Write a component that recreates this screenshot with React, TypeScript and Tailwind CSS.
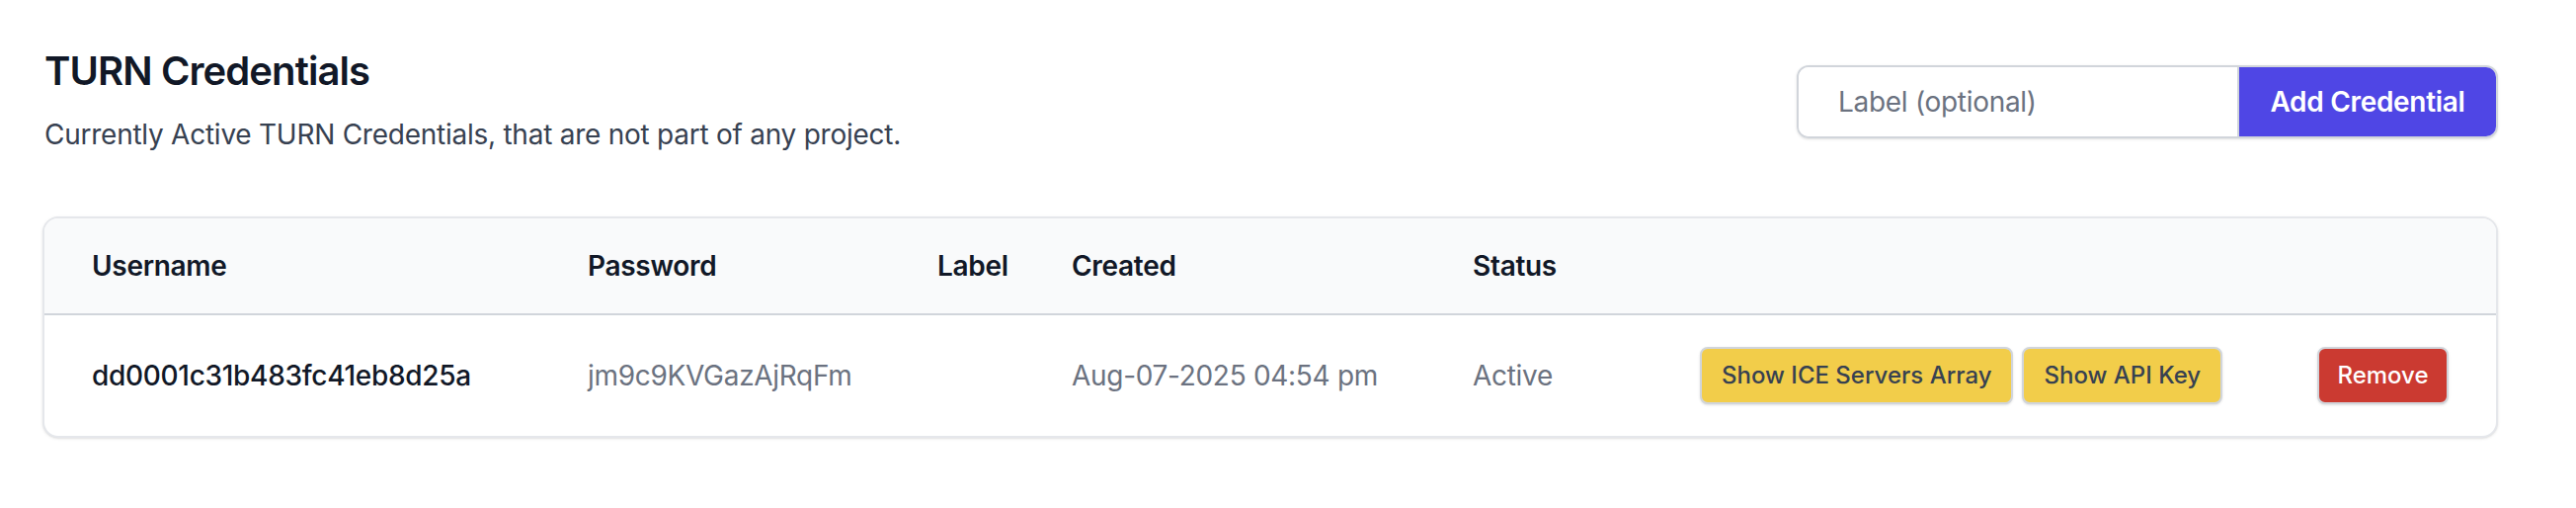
import React from "react";

const font = { fontFamily: "Inter, 'Noto Sans', sans-serif" };

export default function App() {
  return (
    <div
      className="w-[2608px] h-[514px] bg-white pl-[43px] pr-[79px] pt-[44px] text-[#111827]"
      style={font}
    >
      <div className="flex items-center justify-between pl-[2px]">
        <div>
          <h1 className="text-[40px] leading-[56px] font-semibold tracking-[-0.9px] text-[#111827]">
            TURN Credentials
          </h1>
          <p className="mt-[16px] text-[28px] leading-[40px] tracking-[-0.25px] text-[#374151]">
            Currently Active TURN Credentials, that are not part of any project.
          </p>
        </div>
        <div className="flex h-[74px] mt-[6px] rounded-[12px] shadow-sm border-2 border-[#d1d5db] overflow-hidden">
          <input
            className="w-[446px] h-full pl-[40px] pr-[20px] text-[28px] tracking-[-0.3px] text-[#111827] placeholder:text-[#6b7280] outline-none bg-white border-r-2 border-[#d1d5db]"
            placeholder="Label (optional)"
          />
          <button className="w-[260px] h-full bg-[#4f46e5] text-white text-[28px] tracking-[-0.3px] font-semibold">
            Add Credential
          </button>
        </div>
      </div>

      <div className="mt-[63px] rounded-[16px] border-2 border-[#e5e7eb] shadow-sm overflow-hidden bg-white">
        <div className="grid grid-cols-[502px_354px_136px_406px_230px_625px_1fr] h-[98px] items-center bg-[#f9fafb] border-b-2 border-[#d1d5db] text-[28px] tracking-[-0.3px] font-semibold text-[#111827]">
          <div className="pl-[48px]">Username</div>
          <div className="pl-[48px]">Password</div>
          <div className="pl-[48px]">Label</div>
          <div className="pl-[48px]">Created</div>
          <div className="pl-[48px]">Status</div>
          <div></div>
          <div></div>
        </div>
        <div className="grid grid-cols-[502px_354px_136px_406px_230px_625px_1fr] h-[122px] items-center text-[28px] tracking-[-0.3px]">
          <div className="pl-[48px] font-medium text-[#111827]">dd0001c31b483fc41eb8d25a</div>
          <div className="pl-[48px] text-[#6b7280]">jm9c9KVGazAjRqFm</div>
          <div className="pl-[48px] text-[#6b7280]"></div>
          <div className="pl-[48px] text-[#6b7280]">Aug-07-2025 04:54 pm</div>
          <div className="pl-[48px] text-[#6b7280]">Active</div>
          <div className="pl-[48px] flex gap-[9px]">
            <button className="h-[58px] px-[20px] rounded-[8px] bg-[#f2cd4a] border-2 border-[#d1d5db] text-[24px] tracking-normal font-medium text-[#374151] shadow-sm">
              Show ICE Servers Array
            </button>
            <button className="h-[58px] px-[20px] rounded-[8px] bg-[#f2cd4a] border-2 border-[#d1d5db] text-[24px] tracking-normal font-medium text-[#374151] shadow-sm">
              Show API Key
            </button>
          </div>
          <div className="pl-[48px] flex">
            <button className="h-[58px] w-[133px] rounded-[8px] bg-[#cb3a31] border-2 border-[#d1d5db] text-[24px] tracking-normal font-medium text-white shadow-sm">
              Remove
            </button>
          </div>
        </div>
      </div>
    </div>
  );
}
